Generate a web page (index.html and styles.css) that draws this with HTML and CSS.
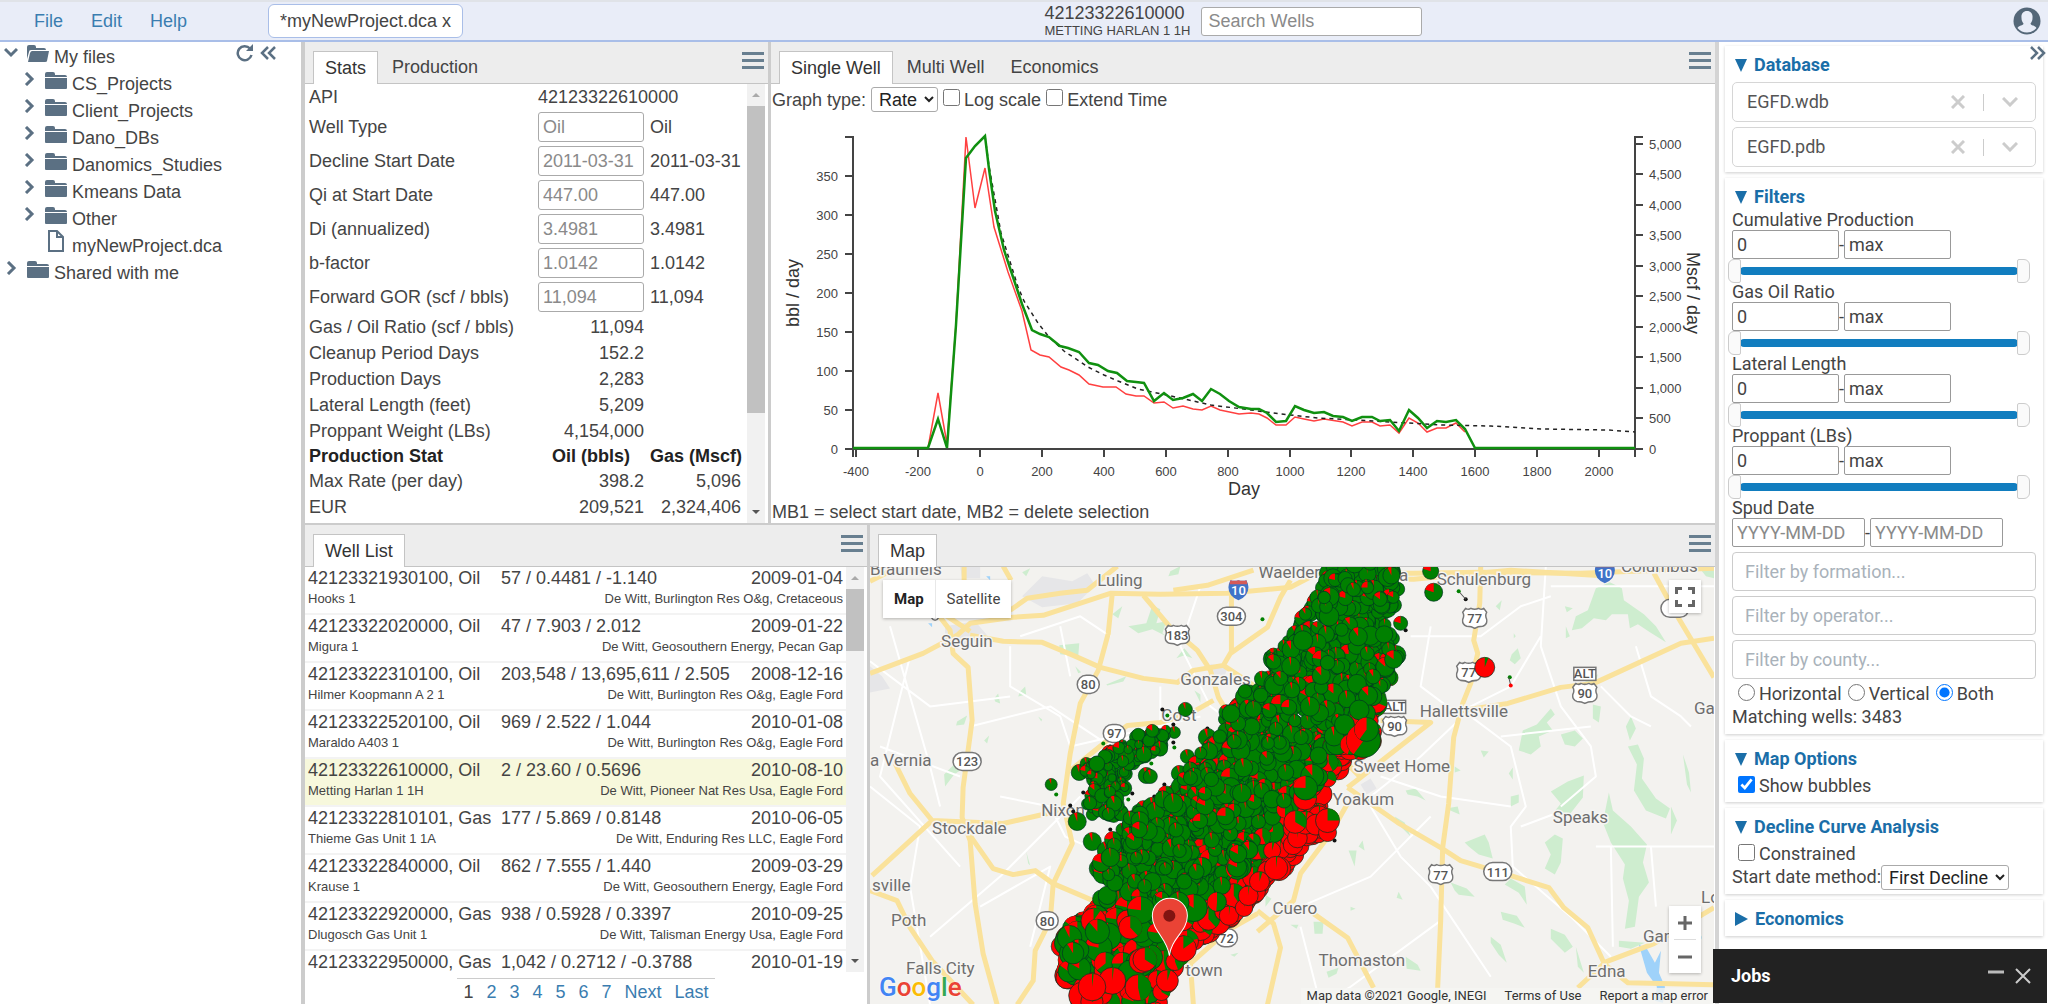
FILE: index.html
```html
<!DOCTYPE html>
<html lang="en">
<head>
    <meta charset="utf-8">
    <title>myNewProject.dca</title>
    <link rel="stylesheet" href="styles.css">
</head>
<body>
    <svg class="defs" width="0" height="0">
        <symbol id="folder" viewBox="0 0 22 18"><path d="M0 2q0-2 2-2h6q2 0 2 2v1h10q2 0 2 2H0zM0 6h22v10q0 1-1 1H1q-1 0-1-1z"/></symbol>
        <symbol id="folder_open" viewBox="0 0 22 18"><path d="M0 14V2q0-2 2-2h5q2 0 2 2v1h8q2 0 2 2H4q-2 0-2 2zM1 17l2-9q1-2 2-2h17l-2 10q0 1-2 1z"/></symbol>
        <symbol id="file" viewBox="0 0 16 22"><path d="M1 1h8l6 6v14H1zM9 1v6h6" fill="none" stroke="#5b7083" stroke-width="2"/></symbol>
        <symbol id="right" viewBox="0 0 10 14"><path d="M2 1l6 6-6 6" fill="none" stroke="#5b7083" stroke-width="3"/></symbol>
        <symbol id="down" viewBox="0 0 14 10"><path d="M1 2l6 6 6-6" fill="none" stroke="#5b7083" stroke-width="3"/></symbol>
        <symbol id="menu" viewBox="0 0 22 17"><path d="M0 1.5h22M0 8.5h22M0 15.5h22" stroke="#687f90" stroke-width="3"/></symbol>
        <symbol id="clear" viewBox="0 0 14 14"><path d="M1 1l12 12M13 1L1 13" stroke="#ccc" stroke-width="3"/></symbol>
        <symbol id="caret" viewBox="0 0 16 10"><path d="M1 1l7 7 7-7" fill="none" stroke="#ccc" stroke-width="3"/></symbol>
        <symbol id="us" viewBox="0 0 26 22"><path d="M4 1q3 2 5 0q4 2 8 0q3 2 5 0l3 4q-2 3 0 7q1 5-4 7q-5 0-8 2q-3-2-8-2q-5-2-4-7q2-4 0-7z" fill="#fff" stroke="#777" stroke-width="1.5"/></symbol>
        <symbol id="interstate" viewBox="0 0 22 22"><path d="M3 1q4 1 8 0q4 1 8 0q2 4 2 7q0 9-10 13q-10-4-10-13q0-3 2-7z" fill="#3f73c8"/><path d="M3 1q4 1 8 0q4 1 8 0l1 4H2z" fill="#d55a58"/></symbol>
    </svg>

    <header class="topbar">
        <div class="topbar_left">
            <nav class="menu">
                <a href="#">File</a>
                <a href="#">Edit</a>
                <a href="#">Help</a>
            </nav>
            <button class="project_tab">*myNewProject.dca x</button>
        </div>
        <div class="well_title">
            <div>42123322610000</div>
            <div class="small">METTING HARLAN 1 1H</div>
        </div>
        <input class="search" type="text" placeholder="Search Wells" aria-label="Search Wells">
        <button class="user" aria-label="Account">
            <svg width="28" height="28" viewBox="0 0 28 28"><circle cx="14" cy="14" r="13.5" fill="#546778"/><path d="M14 4c4 0 6 3 5.500 7c0 3-1 4-2 5.500c0 2 5 2 6 4.500q-4 4.500-9.500 4.500T4.500 21c1-2.500 6-2.500 6-4.500c-1-1.500-2-2.500-2-5.500C8 7 10 4 14 4z" fill="#e9edf8"/></svg>
        </button>
    </header>

    <main class="layout">
        <aside class="files">
            <div class="files_tools">
                <button aria-label="Refresh"><svg width="18" height="18" viewBox="0 0 18 18"><path d="M14 4.500A7 7 0 1 0 15.500 11" fill="none" stroke="#5b7083" stroke-width="2.500"/><path d="M17 0v7h-7z" fill="#5b7083"/></svg></button>
                <button aria-label="Collapse"><svg width="16" height="16" viewBox="0 0 16 16"><path d="M8 2L2 8l6 6M15 2L9 8l6 6" fill="none" stroke="#5b7083" stroke-width="2.500"/></svg></button>
            </div>
            <ul class="tree">
                <li><svg class="arrow"><use href="#down"/></svg><svg class="icon"><use href="#folder_open"/></svg>My files</li>
                <li class="child"><svg class="arrow"><use href="#right"/></svg><svg class="icon"><use href="#folder"/></svg>CS_Projects</li>
                <li class="child"><svg class="arrow"><use href="#right"/></svg><svg class="icon"><use href="#folder"/></svg>Client_Projects</li>
                <li class="child"><svg class="arrow"><use href="#right"/></svg><svg class="icon"><use href="#folder"/></svg>Dano_DBs</li>
                <li class="child"><svg class="arrow"><use href="#right"/></svg><svg class="icon"><use href="#folder"/></svg>Danomics_Studies</li>
                <li class="child"><svg class="arrow"><use href="#right"/></svg><svg class="icon"><use href="#folder"/></svg>Kmeans Data</li>
                <li class="child"><svg class="arrow"><use href="#right"/></svg><svg class="icon"><use href="#folder"/></svg>Other</li>
                <li class="child"><svg class="arrow"></svg><svg class="icon doc"><use href="#file"/></svg>myNewProject.dca</li>
                <li><svg class="arrow"><use href="#right"/></svg><svg class="icon"><use href="#folder"/></svg>Shared with me</li>
            </ul>
        </aside>

        <div class="center">
            <div class="row row_top">
                <section class="panel">
                    <div class="tabs">
                        <button class="tab active">Stats</button>
                        <button class="tab">Production</button>
                        <button class="panel_menu" aria-label="Panel menu"><svg width="22" height="17"><use href="#menu"/></svg></button>
                    </div>
                    <div class="scroll_area">
                        <div class="scroll_content">
                            <table class="stats">
                                <colgroup><col class="col_name"><col class="col_oil"><col></colgroup>
                                <tr><td>API</td><td colspan="2">42123322610000</td></tr>
                                <tr class="edit"><td><label for="well_type">Well Type</label></td><td><input id="well_type" placeholder="Oil"></td><td>Oil</td></tr>
                                <tr class="edit"><td><label for="decline_start">Decline Start Date</label></td><td><input id="decline_start" placeholder="2011-03-31"></td><td>2011-03-31</td></tr>
                                <tr class="edit"><td><label for="qi">Qi at Start Date</label></td><td><input id="qi" placeholder="447.00"></td><td>447.00</td></tr>
                                <tr class="edit"><td><label for="di">Di (annualized)</label></td><td><input id="di" placeholder="3.4981"></td><td>3.4981</td></tr>
                                <tr class="edit"><td><label for="b_factor">b-factor</label></td><td><input id="b_factor" placeholder="1.0142"></td><td>1.0142</td></tr>
                                <tr class="edit"><td><label for="gor">Forward GOR (scf / bbls)</label></td><td><input id="gor" placeholder="11,094"></td><td>11,094</td></tr>
                                <tr class="num"><td>Gas / Oil Ratio (scf / bbls)</td><td>11,094</td><td></td></tr>
                                <tr class="num"><td>Cleanup Period Days</td><td>152.2</td><td></td></tr>
                                <tr class="num"><td>Production Days</td><td>2,283</td><td></td></tr>
                                <tr class="num"><td>Lateral Length (feet)</td><td>5,209</td><td></td></tr>
                                <tr class="num"><td>Proppant Weight (LBs)</td><td>4,154,000</td><td></td></tr>
                                <tr class="head"><th>Production Stat</th><th>Oil (bbls)</th><th>Gas (Mscf)</th></tr>
                                <tr class="num"><td>Max Rate (per day)</td><td>398.2</td><td>5,096</td></tr>
                                <tr class="num"><td>EUR</td><td>209,521</td><td>2,324,406</td></tr>
                            </table>
                        </div>
                        <div class="scrollbar"><i class="up"></i><b class="thumb thumb_stats"></b><i class="dn"></i></div>
                    </div>
                </section>

                <section class="panel">
                    <div class="tabs">
                        <button class="tab active">Single Well</button>
                        <button class="tab">Multi Well</button>
                        <button class="tab">Economics</button>
                        <button class="panel_menu" aria-label="Panel menu"><svg width="22" height="17"><use href="#menu"/></svg></button>
                    </div>
                    <div class="chart_tools">
                        <label for="graph_type">Graph type:</label>
                        <select id="graph_type"><option>Rate</option></select>
                        <label><input type="checkbox">Log scale</label>
                        <label><input type="checkbox">Extend Time</label>
                    </div>
                    <svg class="chart" viewBox="0 0 942 386">
                        <g id="axes"></g>
                        <text class="axis_title" transform="translate(21 178) rotate(-90)" text-anchor="middle" dy="6">bbl / day</text>
                        <text class="axis_title" transform="translate(921 178) rotate(90)" text-anchor="middle" dy="6">Mscf / day</text>
                        <text class="axis_title" x="472" y="380" text-anchor="middle">Day</text>
                        <polyline class="gas" points="81,333 156,333 166,278 175,329 184,209 194,22 203,93 213,53 222,112 236,157 250,196 259,235 268,240 277,242 289,252 297,255 307,260 317,269 331,272 344,272 354,279 364,281 372,281 382,288 392,287 401,293 411,291 421,294 430,295 439,291 448,295 467,299 479,298 487,299 495,303 504,310 514,310 523,302 532,304 542,306 552,304 571,307 580,311 590,307 600,307 608,311 618,310 627,318 637,303 646,308 655,317 665,313 674,313 684,308 693,317"/>
                        <polyline class="fit" points="213,21 217,51 229,118 246,172 252,186 266,208 277,222 292,236 316,252 332,260 346,266 366,274 399,281 439,290 479,295 509,299 546,303 602,306 669,310 719,311 769,314 836,315 863,317"/>
                        <polyline class="oil" points="81,333 156,333 166,304 175,333 184,210 194,43 203,31 213,21 217,54 223,96 232,135 241,162 250,189 260,215 268,219 277,222 288,231 296,233 307,237 317,248 326,250 336,256 345,258 355,266 364,267 372,268 382,286 392,278 401,285 411,283 421,279 430,286 439,274 448,279 457,286 467,292 479,294 487,294 495,298 504,307 514,306 523,291 532,295 542,298 552,297 561,301 571,302 580,306 590,302 600,302 608,306 618,305 627,316 637,295 646,303 655,313 665,306 674,307 684,305 693,314 703,333 863,333"/>
                    </svg>
                    <div class="hint">MB1 = select start date, MB2 = delete selection</div>
                </section>
            </div>

            <div class="row row_bottom">
                <section class="panel">
                    <div class="tabs">
                        <button class="tab active">Well List</button>
                        <button class="panel_menu" aria-label="Panel menu"><svg width="22" height="17"><use href="#menu"/></svg></button>
                    </div>
                    <div class="scroll_area">
                        <ul class="scroll_content wells">
                            <li><div class="well_main"><span>42123321930100, Oil</span><span>57 / 0.4481 / -1.140</span><span>2009-01-04</span></div><div class="well_sub"><span>Hooks 1</span><span>De Witt, Burlington Res O&amp;g, Cretaceous</span></div></li>
                            <li><div class="well_main"><span>42123322020000, Oil</span><span>47 / 7.903 / 2.012</span><span>2009-01-22</span></div><div class="well_sub"><span>Migura 1</span><span>De Witt, Geosouthern Energy, Pecan Gap</span></div></li>
                            <li><div class="well_main"><span>42123322310100, Oil</span><span>203,548 / 13,695,611 / 2.505</span><span>2008-12-16</span></div><div class="well_sub"><span>Hilmer Koopmann A 2 1</span><span>De Witt, Burlington Res O&amp;g, Eagle Ford</span></div></li>
                            <li><div class="well_main"><span>42123322520100, Oil</span><span>969 / 2.522 / 1.044</span><span>2010-01-08</span></div><div class="well_sub"><span>Maraldo A403 1</span><span>De Witt, Burlington Res O&amp;g, Eagle Ford</span></div></li>
                            <li class="selected"><div class="well_main"><span>42123322610000, Oil</span><span>2 / 23.60 / 0.5696</span><span>2010-08-10</span></div><div class="well_sub"><span>Metting Harlan 1 1H</span><span>De Witt, Pioneer Nat Res Usa, Eagle Ford</span></div></li>
                            <li><div class="well_main"><span>42123322810101, Gas</span><span>177 / 5.869 / 0.8148</span><span>2010-06-05</span></div><div class="well_sub"><span>Thieme Gas Unit 1 1A</span><span>De Witt, Enduring Res LLC, Eagle Ford</span></div></li>
                            <li><div class="well_main"><span>42123322840000, Oil</span><span>862 / 7.555 / 1.440</span><span>2009-03-29</span></div><div class="well_sub"><span>Krause 1</span><span>De Witt, Geosouthern Energy, Eagle Ford</span></div></li>
                            <li><div class="well_main"><span>42123322920000, Gas</span><span>938 / 0.5928 / 0.3397</span><span>2010-09-25</span></div><div class="well_sub"><span>Dlugosch Gas Unit 1</span><span>De Witt, Talisman Energy Usa, Eagle Ford</span></div></li>
                            <li><div class="well_main"><span>42123322950000, Gas</span><span>1,042 / 0.2712 / -0.3788</span><span>2010-01-19</span></div></li>
                        </ul>
                        <div class="scrollbar"><i class="up"></i><b class="thumb thumb_wells"></b><i class="dn"></i></div>
                    </div>
                    <nav class="pages">
                        <span>1</span>
                        <a href="#">2</a>
                        <a href="#">3</a>
                        <a href="#">4</a>
                        <a href="#">5</a>
                        <a href="#">6</a>
                        <a href="#">7</a>
                        <a href="#">Next</a>
                        <a href="#">Last</a>
                    </nav>
                </section>

                <section class="panel">
                    <div class="tabs">
                        <button class="tab active">Map</button>
                        <button class="panel_menu" aria-label="Panel menu"><svg width="22" height="17"><use href="#menu"/></svg></button>
                    </div>
                    <div class="map">
                        <svg class="map_canvas" viewBox="0 0 843 438" preserveAspectRatio="xMidYMid slice">
                            <g class="urban">
                                <path d="M152 30l20-20 30 5 15-8 8 12-18 18-35 4z"/>
                                <path d="M0 100l12 10 8 12-20 4zM75 60l30-5 12 14-20 10-22-4zM340 98l18 2-4 10-14-2zM90 0l20 0 0 12-18 0zM490 218l10-6 6 10-10 6zM30 350l12-2 4 8-14 2z"/>
                            </g>
                            <g class="park">
                                <path d="M189 79l20-2-1 13-18-2zM124 132l4-5 2 10-5-2zM150 125l5-5 1 8-8 2zM87 155l10-6-3 9-8 1zM74 208l10-10 12 2-12 8-9 12zM114 174l5-5-2 8zM168 150l4 3-1 2z"/>
                                <path d="M258 60l18-3 6-18 8 4-4 14 10-2-4 12 6 4-16-8-14 4zM300 5l10-5-2 8-10 2zM306 92l8-10 8 10-8-3zM236 118l20-8-3 5-16 4zM242 48l10-8-4 12zM324 124l6 4 0 8zM205 100l6 6-3 1zM152 6l8-4-4 8zM156 285l4 14-2-2z"/>
                                <path d="M705 50l12-6 8-22 14-6 12 6 2 12 20 14 12 12 10 16-16-10-12-8-8 4-2-14-16 0-6 6-12-2-12 10-10 2zM694 40l8 2-6 4zM641 88l6-6 3 10-6 6-5-4zM695 60l4 10-4 2zM643 67l2 3-2 2zM713 116l14-8-2 8-14 4zM722 138l8 2-2 16-6-4z"/>
                                <path d="M652 164l14-6 14-16 4 6-8 8 6 8-14 6 2 10-10 8-12-4zM690 168l14-4 8 8-8 8-10-2zM697 215l16-6-1 22-14 18-16-2 8-10-10-12zM757 180l10-2 6 14-2 20 14 20 14 10-4 10-20-8-12-20 3-26zM755 160l5-10 5 12-6 12zM800 240l6 14-6 14zM812 188l6 18 2 20-4-8z"/>
                                <path d="M738 226l4 18 18 16 16 18-4 18 6 20-10 14-4 30-10 2 4-28-6-22 2-14-14-22-8-20zM674 276l10-8 8 4-2 24-6 12-10-6 6-14zM594 276l20-8 4 8 4 16-14-4-10-8zM640 312l14 8 2 18-8-12-14-8zM640 230l8-2 0 8-8 4zM580 316l16 6 8 8-16-2-4-4zM524 250l10 6 6 14-10-10zM478 284l8 0-2 16zM488 280l4-6 2 10zM610 184l8 1-5 6zM575 242l12-2 2 8zM535 224l10-2 10 12-8-4-10-2zM584 200l6 4-6 2zM638 207l4-6 0 12zM630 345l16 4 8 12-10-4-12-4zM680 362l14 6 8 12-8 6-14-14zM705 380l8 26-6-6zM748 374l26 2-14 6-12-2zM620 370l10 8 6 18-8-8-8-12zM535 390l12 8 3 6-14-2zM456 405l12-4-2 6-8 4zM443 355l10 0-1 12-8 0zM420 358l8 0-2 4zM528 325l4 8-6-2zM480 340l5 2-5 2zM395 328l6 4-6 8zM360 388l8-2-4 4zM827 0l16 0 0 12-8-2zM625 40l6-6-2 10z"/>
                            </g>
                            <path class="water" d="M768 378l8 4 8 14 6-12-2 22 6 14-2 16-8-2 2-14-10-14zM116 10l4 0 0 4zM58 57l4 0 0 4z"/>
                            <g class="minor">
                                <path d="M0 95L60 140 140 130M40 90L10 210 90 300M20 60L60 200 70 240M140 80V120L190 150 200 180 330 150M190 60L200 110M100 160L180 140 240 180M0 220L50 260 40 320 60 438M110 340L180 300 160 380M60 370L130 310 210 230M130 230L180 240 195 270 240 290M10 180L90 210M330 20L310 80 340 140 420 200M150 70l60-20 30 20M290 120l0 40-60 20"/>
                                <path d="M540 70H610L650 40 680 30M675 0L670 80 690 140 720 180 725 210 690 240M560 60L550 120 590 150M592 144L640 120 670 70M592 144L640 180 655 240 640 260 642 300 700 350 740 390M500 160L470 200 430 260M500 240L530 290 560 320 620 410M560 250L500 310 430 340M650 260L690 245M725 280H843M740 280L742 380M780 280L785 340M630 170L720 160M820 160L810 150 780 130 765 80M570 354L480 420 450 438M430 360L450 438M592 150L550 190 500 230M510 210L570 230 640 240M730 120L760 150 780 160M680 20H843"/>
                            </g>
                            <g class="road">
                                <path d="M0 107L53 87 87 69 100 57 143 51 173 49 240 27 290 28 357 27 420 21 447 7 543 7 610 6 710 7 843 2"/>
                                <path d="M140 44L157 32 190 27 217 24 247 0M303 24L337 19 383 4M0 15L30 0M94 0v20M133 0l8 14M450 12L543 13 640 4 740 10"/>
                                <path d="M70 51L80 64 83 87 98 101 102 154 93 221 92 251 100 274 105 337 113 387 127 438M62 40l38 25"/>
                                <path d="M100 69L133 75 172 76 203 89 230 101 273 112 307 116 323 104 353 99 360 87 397 61 410 31 420 14M353 99l30 20"/>
                                <path d="M242 27L238 67 228 104 210 137 200 187 193 237 202 277 183 317 180 354 165 384 163 414 147 438M361 24V87"/>
                                <path d="M273 29L300 61 327 84 340 104 348 131 360 151M343 134L320 147 290 156 257 159 237 174 200 204"/>
                                <path d="M25 197L40 227 62 254 2 309M62 254L133 257 177 247 230 239M100 269L123 302 143 308 165 304 183 317 230 337"/>
                                <path d="M0 324L27 334 40 361 62 394 103 438M387 347L357 364 320 397 323 438M387 344L403 357 410 381 397 438"/>
                                <path d="M477 221L490 211 533 177 560 156 510 154M477 237L460 267 430 307 423 334 387 365M490 211L460 180"/>
                                <path d="M610 0L609 37 603 74 607 87 600 117 592 137 583 171 578 237 572 281 570 354 567 421"/>
                                <path d="M592 144L637 137 690 121 723 117 810 77 843 72M477 221L527 256 570 281 590 294 640 309 678 321 693 341 717 361 733 396 783 377 843 341"/>
                                <path d="M733 397L707 421M733 397L757 416 843 418M443 347L477 371 503 421M783 7L807 51 843 111"/>
                            </g>
                            <g id="labels"></g>
                            <g id="bubbles"></g>
                            <path d="M299 389C297 371 282 365 282 349A17.500 17.500 0 0 1 317 349C317 365 301 371 299 389z" fill="#ea4335" stroke="#fff" stroke-width="1"/>
                            <circle cx="299" cy="349" r="6" fill="#811411"/>
                        </svg>
                        <div class="map_type">
                            <button class="on">Map</button>
                            <button>Satellite</button>
                        </div>
                        <button class="map_button fullscreen" aria-label="Full screen"><svg width="20" height="20" viewBox="0 0 20 20"><path d="M1.500 7V1.500H7M13 1.500h5.500V7M18.500 13v5.500H13M7 18.500H1.500V13" fill="none" stroke="#666" stroke-width="3"/></svg></button>
                        <div class="zoom">
                            <button aria-label="Zoom in"><svg width="14" height="14" viewBox="0 0 14 14"><path d="M7 0v14M0 7h14" stroke="#666" stroke-width="3"/></svg></button>
                            <button aria-label="Zoom out"><svg width="14" height="14" viewBox="0 0 14 14"><path d="M0 7h14" stroke="#666" stroke-width="3"/></svg></button>
                        </div>
                        <div class="google"><span class="g_blue">G</span><span class="g_red">o</span><span class="g_yellow">o</span><span class="g_blue">g</span><span class="g_green">l</span><span class="g_red">e</span></div>
                        <div class="credits"><span>Map data ©2021 Google, INEGI</span><a href="#">Terms of Use</a><a href="#">Report a map error</a></div>
                    </div>
                </section>
            </div>
        </div>

        <aside class="options">
            <button class="hide_options" aria-label="Hide options"><svg width="16" height="16" viewBox="0 0 16 16"><path d="M1 2l6 6-6 6M8 2l6 6-6 6" fill="none" stroke="#5b7083" stroke-width="2.500"/></svg></button>
            <details class="card" open>
                <summary>Database</summary>
                <div class="picker"><select aria-label="Well database"><option>EGFD.wdb</option></select><svg width="14" height="14"><use href="#clear"/></svg><i></i><svg width="16" height="10"><use href="#caret"/></svg></div>
                <div class="picker"><select aria-label="Production database"><option>EGFD.pdb</option></select><svg width="14" height="14"><use href="#clear"/></svg><i></i><svg width="16" height="10"><use href="#caret"/></svg></div>
            </details>
            <details class="card" open>
                <summary>Filters</summary>
                <div class="filter">
                    <label for="cum_min">Cumulative Production</label>
                    <div class="range_inputs"><input id="cum_min" value="0">-<input value="max" aria-label="Cumulative Production max"></div>
                    <div class="range"><input type="range" class="low" value="0" aria-label="Cumulative Production from"><input type="range" class="high" value="100" aria-label="Cumulative Production to"></div>
                </div>
                <div class="filter">
                    <label for="gor_min">Gas Oil Ratio</label>
                    <div class="range_inputs"><input id="gor_min" value="0">-<input value="max" aria-label="Gas Oil Ratio max"></div>
                    <div class="range"><input type="range" class="low" value="0" aria-label="Gas Oil Ratio from"><input type="range" class="high" value="100" aria-label="Gas Oil Ratio to"></div>
                </div>
                <div class="filter">
                    <label for="lat_min">Lateral Length</label>
                    <div class="range_inputs"><input id="lat_min" value="0">-<input value="max" aria-label="Lateral Length max"></div>
                    <div class="range"><input type="range" class="low" value="0" aria-label="Lateral Length from"><input type="range" class="high" value="100" aria-label="Lateral Length to"></div>
                </div>
                <div class="filter">
                    <label for="prop_min">Proppant (LBs)</label>
                    <div class="range_inputs"><input id="prop_min" value="0">-<input value="max" aria-label="Proppant max"></div>
                    <div class="range"><input type="range" class="low" value="0" aria-label="Proppant from"><input type="range" class="high" value="100" aria-label="Proppant to"></div>
                </div>
                <div class="filter">
                    <label for="spud_min">Spud Date</label>
                    <div class="range_inputs dates"><input id="spud_min" placeholder="YYYY-MM-DD">-<input placeholder="YYYY-MM-DD" aria-label="Spud Date to"></div>
                </div>
                <input class="wide" placeholder="Filter by formation..." aria-label="Filter by formation">
                <input class="wide" placeholder="Filter by operator..." aria-label="Filter by operator">
                <input class="wide" placeholder="Filter by county..." aria-label="Filter by county">
                <div class="checks">
                    <label><input type="radio" name="direction">Horizontal</label>
                    <label><input type="radio" name="direction">Vertical</label>
                    <label><input type="radio" name="direction" checked>Both</label>
                </div>
                <div class="line">Matching wells: 3483</div>
            </details>
            <details class="card" open>
                <summary>Map Options</summary>
                <div class="checks"><label><input type="checkbox" checked>Show bubbles</label></div>
            </details>
            <details class="card" open>
                <summary>Decline Curve Analysis</summary>
                <div class="checks"><label><input type="checkbox">Constrained</label></div>
                <div class="line"><label for="start_method">Start date method:</label><select id="start_method"><option>First Decline</option></select></div>
            </details>
            <details class="card">
                <summary>Economics</summary>
            </details>
        </aside>
    </main>

    <div class="jobs">
        <b>Jobs</b>
        <button aria-label="Minimize"><svg width="16" height="16" viewBox="0 0 16 16"><path d="M0 4h16" stroke="#bbb" stroke-width="3"/></svg></button>
        <button aria-label="Close"><svg width="16" height="16" viewBox="0 0 16 16"><path d="M1 1l14 14M15 1L1 15" stroke="#ccc" stroke-width="2"/></svg></button>
    </div>

    <script src="script.js"></script>
</body>
</html>
```
FILE: styles.css
```css
* {
    box-sizing: border-box;
}
body {
    margin: 0;
    height: 100vh;
    display: flex;
    flex-direction: column;
    overflow: hidden;
    font-family: "Liberation Sans", Arial, sans-serif;
    font-size: 18px;
    line-height: 22px;
    color: #444;
    background: #fff;
}
button, input, select {
    font: inherit;
    color: inherit;
}
button {
    border: 0;
    padding: 0;
    background: none;
}
a {
    color: #3a7db0;
    text-decoration: none;
}
ul {
    list-style: none;
    margin: 0;
    padding: 0;
}
svg {
    display: block;
}
.defs {
    position: absolute;
}
.small {
    font-size: 13px;
    line-height: 16px;
}

/* top bar */
.topbar {
    display: flex;
    align-items: center;
    height: 42px;
    flex: none;
    border-top: 2px solid #e0e3e8;
    border-bottom: 2px solid #a9bee8;
    background: #e9edf8;
}
.topbar_left {
    display: flex;
    align-items: center;
    width: 51%;
    padding-left: 34px;
}
.menu {
    display: flex;
    gap: 28px;
    width: 234px;
}
.project_tab {
    height: 34px;
    padding: 0 11px;
    border: 1px solid #a9bee8;
    border-radius: 6px;
    background: #fff;
}
.well_title {
    width: 157px;
    line-height: 20px;
}
.search {
    width: 221px;
    height: 29px;
    padding: 0 6px;
    border: 1px solid #aaa;
    border-radius: 3px;
    background: #fff;
}
.search::placeholder, .stats input::placeholder, .dates input::placeholder {
    color: #8a8a8a;
}
.user {
    margin: 0 7px 0 auto;
}

.layout {
    flex: 1;
    min-height: 0;
    display: flex;
}

/* file tree */
.files {
    width: 305px;
    flex: none;
    border-right: 4px solid #ccc;
}
.files_tools {
    float: right;
    display: flex;
    align-items: center;
    gap: 6px;
    padding: 2px 25px 0 0;
}
.tree {
    margin-top: -1px;
    padding-left: 4px;
    fill: #5b7083;
}
.tree li {
    display: flex;
    height: 27px;
    align-items: flex-end;
}
.tree .child {
    padding-left: 18px;
}
.tree .arrow {
    width: 14px;
    height: 14px;
    margin: 0 9px 9px 0;
}
.tree .icon {
    width: 22px;
    height: 18px;
    margin: 0 5px 5px 0;
}
.tree .doc {
    height: 22px;
}

/* panels */
.center {
    flex: 1;
    min-width: 0;
    display: grid;
    grid-template-rows: 50% 1fr;
    gap: 2px;
    background: #ccc;
}
.row {
    display: grid;
    gap: 3px;
    min-height: 0;
}
.row_top {
    grid-template-columns: 463px 1fr;
}
.row_bottom {
    grid-template-columns: 562px 1fr;
}
.panel {
    display: flex;
    flex-direction: column;
    min-width: 0;
    min-height: 0;
    background: #fff;
}
.tabs {
    display: flex;
    align-items: flex-end;
    gap: 2px;
    height: 42px;
    flex: none;
    padding: 0 4px 0 8px;
    background: linear-gradient(#c4c4c4, #c4c4c4) bottom / 100% 1px no-repeat #ededed;
}
.tab {
    height: 33px;
    padding: 0 11px 2px;
    border: 1px solid transparent;
    border-bottom: 0;
}
.tab.active {
    padding-bottom: 0;
    border-color: #c4c4c4;
    background: #fff;
    color: #333;
}
.panel_menu {
    margin-left: auto;
    align-self: flex-start;
    padding-top: 10px;
}
.scroll_area {
    flex: 1;
    min-height: 0;
    display: flex;
}
.scroll_content {
    flex: 1;
    overflow: hidden;
}
.scrollbar {
    display: flex;
    flex-direction: column;
    align-items: center;
    width: 18px;
    margin-right: 3px;
    padding: 9px 0;
    background: #f1f1f1;
}
.scrollbar i {
    border: 4px solid transparent;
}
.scrollbar .up {
    border-top: 0;
    border-bottom-color: #aaa;
    margin-bottom: 9px;
}
.scrollbar .dn {
    border-bottom: 0;
    border-top-color: #555;
    margin-top: auto;
}
.thumb {
    width: 18px;
    background: #c1c1c1;
}
.thumb_stats {
    height: 73%;
}
.thumb_wells {
    height: 16%;
}

/* stats */
.stats {
    width: 100%;
    table-layout: fixed;
    border-spacing: 0;
}
.col_name {
    width: 233px;
}
.col_oil {
    width: 112px;
}
.stats tr {
    height: 26px;
}
.stats .edit {
    height: 34px;
}
.stats .head {
    height: 24px;
    color: #222;
}
.stats td, .stats th {
    padding: 0 6px 0 0;
    white-space: nowrap;
}
.stats td:first-child, .stats th:first-child {
    padding-left: 4px;
    text-align: left;
}
.stats .num td:not(:first-child) {
    text-align: right;
}
.stats input {
    display: block;
    width: 106px;
    height: 30px;
    padding: 0 4px;
    border: 1px solid #aaa;
    border-radius: 3px;
}

/* chart */
.chart_tools {
    display: flex;
    align-items: center;
    height: 31px;
    padding-left: 1px;
    gap: 5px;
}
.chart_tools label {
    display: flex;
    align-items: center;
}
select {
    height: 25px;
    padding: 0 3px;
    border: 1px solid #aaa;
    border-radius: 3px;
    background: #fff;
    color: #222;
}
input[type="checkbox"], input[type="radio"] {
    width: 17px;
    height: 17px;
    margin: 0 4px 4px 0;
}
.chart {
    flex: 1;
    min-height: 0;
    width: 100%;
}
.axis {
    fill: none;
    stroke: #444;
    stroke-width: 2;
}
.tick_label {
    font-size: 13px;
    fill: #444;
}
.axis_title {
    font-size: 18px;
    fill: #333;
}
.gas, .oil, .fit {
    fill: none;
}
.gas {
    stroke: #ff4040;
    stroke-width: 1.5;
}
.oil {
    stroke: #109010;
    stroke-width: 2.5;
}
.fit {
    stroke: #222;
    stroke-width: 1.5;
    stroke-dasharray: 4 4;
}
.hint {
    height: 22px;
    padding-left: 1px;
}

/* well list */
.wells li {
    height: 48px;
    padding: 0 3px;
    border-bottom: 2px solid #f3f3f3;
}
.wells .selected {
    background: #f7f8dc;
}
.well_main {
    display: grid;
    grid-template-columns: 193px 1fr auto;
}
.well_sub {
    display: flex;
    justify-content: space-between;
    font-size: 13px;
    line-height: 20px;
}
.pages {
    display: flex;
    align-self: center;
    gap: 13px;
    height: 26px;
    margin-top: 6px;
    padding: 2px 6px 0;
    border-top: 1px solid #ccc;
}

/* map */
.map {
    position: relative;
    flex: 1;
    min-height: 0;
    margin-right: 1px;
    overflow: hidden;
    background: #f3f2ef;
    font-family: Roboto, sans-serif;
}
.map_canvas {
    width: 100%;
    height: 100%;
}
.urban {
    fill: #e6e6e8;
}
.park {
    fill: #ceedcf;
}
.water {
    fill: #9fd2fa;
}
.minor {
    fill: none;
    stroke: #fff;
    stroke-width: 2;
    stroke-linejoin: round;
}
.road {
    fill: none;
    stroke: #fae29b;
    stroke-width: 5;
    stroke-linejoin: round;
}
.town {
    font-size: 17px;
    fill: #6e6e6e;
    stroke: #f6f5f3;
    stroke-width: 3;
    paint-order: stroke;
}
.shield {
    font-size: 13px;
    font-weight: 500;
    fill: #555;
    text-anchor: middle;
}
.pill {
    fill: #fff;
    stroke: #777;
    stroke-width: 1.5;
}
.on_blue {
    fill: #fff;
}
.map_type {
    position: absolute;
    left: 13px;
    top: 13px;
    display: flex;
    height: 38px;
    background: #fff;
    box-shadow: 0 1px 3px #0004;
    font-size: 15px;
}
.map_type button {
    padding: 0 11px;
}
.map_type .on {
    border-right: 1px solid #e8e8e8;
    color: #222;
    font-weight: 700;
}
.map_button, .zoom {
    position: absolute;
    right: 13px;
    width: 32px;
    background: #fff;
    box-shadow: 0 1px 3px #0004;
}
.map_button svg, .zoom svg {
    margin: auto;
}
.fullscreen {
    top: 13px;
    height: 33px;
}
.zoom {
    bottom: 31px;
    display: grid;
    height: 67px;
}
.zoom button + button {
    margin: 0 5px;
    border-top: 1px solid #ddd;
}
.google {
    position: absolute;
    left: 9px;
    bottom: 1px;
    font-size: 26px;
    line-height: 32px;
    font-weight: 500;
    text-shadow: 0 0 2px #fff;
}
.g_blue {
    color: #4285f4;
}
.g_red {
    color: #ea4335;
}
.g_yellow {
    color: #fbbc05;
}
.g_green {
    color: #34a853;
}
.credits {
    position: absolute;
    right: 0;
    bottom: 0;
    display: flex;
    gap: 18px;
    padding: 0 6px;
    background: #f5f5f3cc;
    font-size: 13px;
    line-height: 16px;
    color: #333;
}
.credits a {
    color: inherit;
}

/* options */
.options {
    position: relative;
    width: 333px;
    flex: none;
    padding: 4px 5px 0 6px;
    border-left: 4px solid #d4d4d4;
    font-family: Roboto, sans-serif;
}
.hide_options {
    position: absolute;
    right: 2px;
    top: 3px;
}
.card {
    margin-bottom: 6px;
    padding: 7px 7px 5px;
    box-shadow: 0 1px 3px #0003;
}
.card summary {
    display: flex;
    align-items: center;
    gap: 7px;
    height: 24px;
    padding-left: 3px;
    font-weight: 700;
    color: #1a6ea8;
}
.card summary::before {
    content: "";
    border: 6px solid transparent;
    border-width: 7px 0 7px 13px;
    border-left-color: #1a6ea8;
}
.card[open] summary::before {
    border-width: 13px 6px 0 6px;
    border-color: #1a6ea8 transparent transparent;
}
.picker {
    display: flex;
    align-items: center;
    gap: 18px;
    height: 40px;
    margin-top: 5px;
    padding: 0 17px 0 14px;
    border: 1px solid #d6d6d6;
    border-radius: 5px;
}
.picker select {
    appearance: none;
    flex: 1;
    padding: 0;
    border: 0;
    color: #555;
}
.picker i {
    width: 1px;
    height: 17px;
    background: #ccc;
}
.filter {
    display: grid;
}
.filter label {
    height: 21px;
    line-height: 21px;
}
.range_inputs {
    display: flex;
    align-items: center;
}
.range_inputs input {
    width: 107px;
    height: 29px;
    padding: 0 4px;
    border: 1px solid #999;
    border-radius: 2px;
}
.range_inputs.dates input {
    width: 133px;
}
.range {
    display: grid;
    align-items: center;
    height: 22px;
    margin: 0 6px 0 -4px;
}
.range::before {
    content: "";
    grid-area: 1 / 1;
    height: 8px;
    margin: 0 12px;
    border-radius: 4px;
    background: #117dbf;
}
.range input {
    grid-area: 1 / 1;
    appearance: none;
    width: 100%;
    margin: 0;
    background: none;
    pointer-events: none;
}
.range input::-webkit-slider-thumb {
    appearance: none;
    width: 13px;
    height: 24px;
    border: 1px solid #ccc;
    background: #fafafa;
    pointer-events: auto;
}
.range .low::-webkit-slider-thumb {
    border-radius: 6px 2px 2px 6px;
}
.range .high::-webkit-slider-thumb {
    border-radius: 2px 6px 6px 2px;
}
.wide {
    display: block;
    width: 100%;
    height: 39px;
    margin-top: 5px;
    padding: 0 12px;
    border: 1px solid #ccc;
    border-radius: 4px;
}
.wide::placeholder {
    color: #a9b2ba;
}
.checks {
    display: flex;
    align-items: flex-end;
    gap: 6px;
    height: 26px;
    padding-left: 6px;
}
.checks label {
    display: flex;
    align-items: center;
}
.line {
    display: flex;
    align-items: center;
    height: 24px;
}

/* jobs */
.jobs {
    position: fixed;
    right: 1px;
    bottom: 1px;
    display: flex;
    align-items: center;
    gap: 11px;
    width: 334px;
    height: 54px;
    padding: 0 16px 0 18px;
    background: #222;
    color: #fff;
    font-family: Roboto, sans-serif;
}
.jobs b {
    flex: 1;
}
```
FILE: script.js
```javascript
const SVG_NS = "http://www.w3.org/2000/svg";

function add(parent, name, attributes, text) {
    const element = document.createElementNS(SVG_NS, name);
    for (const key in attributes) {
        element.setAttribute(key, attributes[key]);
    }
    if (text) {
        element.textContent = text;
    }
    parent.appendChild(element);
    return element;
}

// chart axes
const axes = document.querySelector("#axes");
const left = 81, right = 863, top_ = 22, bottom = 334;
add(axes, "path", {class: "axis", d: `M${left - 8} ${top_}H${left}V${bottom}H${left - 8}`});
add(axes, "path", {class: "axis", d: `M${right + 8} ${top_}H${right}V${bottom}H${right + 8}`});
add(axes, "path", {class: "axis", d: `M${left} ${bottom + 8}V${bottom}H${right}V${bottom + 8}`});
for (let v = 0; v <= 350; v += 50) {
    const y = Math.round(bottom - v * 0.781);
    add(axes, "path", {class: "axis", d: `M${left - 8} ${y}H${left}`});
    add(axes, "text", {class: "tick_label", x: 66, y: y + 5, "text-anchor": "end"}, String(v));
}
for (let v = 0; v <= 5000; v += 500) {
    const y = Math.round(bottom - v * 0.0611);
    add(axes, "path", {class: "axis", d: `M${right} ${y}H${right + 8}`});
    add(axes, "text", {class: "tick_label", x: 877, y: y + 5}, v.toLocaleString("en-US"));
}
for (let v = -400; v <= 2000; v += 200) {
    const x = Math.round(208 + v * 0.3095);
    add(axes, "path", {class: "axis", d: `M${x} ${bottom}v8`});
    add(axes, "text", {class: "tick_label", x: x, y: 361, "text-anchor": "middle"}, String(v));
}

// map labels
const labels = document.querySelector("#labels");
const towns = [
    ["Braunfels", 0, 3], ["Luling", 227, 14], ["Waelder", 388, 6], ["Flatonia", 477, 9],
    ["Schulenburg", 566, 13], ["Columbus", 750, 0], ["Seguin", 71, 75], ["Gonzales", 310, 113],
    ["Cost", 291, 149], ["Hallettsville", 549, 145], ["Sweet Home", 483, 200], ["Yoakum", 462, 232],
    ["Speaks", 682, 250], ["Cuero", 402, 341], ["Thomaston", 448, 393], ["Edna", 717, 404],
    ["Ganado", 772, 369], ["Louise", 830, 330], ["Garwood", 823, 142], ["a Vernia", 0, 194],
    ["Stockdale", 62, 261], ["Nixon", 171, 243], ["Poth", 21, 353], ["sville", 2, 318],
    ["Falls City", 36, 401], ["town", 315, 403]
];
towns.forEach(([name, x, y]) => add(labels, "text", {class: "town", x: x, y: y + 6}, name));

function pill(text, x, y) {
    const w = text.length * 6 + 10;
    add(labels, "rect", {class: "pill", x: x - w / 2, y: y - 9, width: w, height: 18, rx: 9});
    add(labels, "text", {class: "shield", x: x, y: y + 5}, text);
}
function usRoute(text, x, y) {
    add(labels, "use", {href: "#us", x: x - 13, y: y - 11, width: 26, height: 22});
    add(labels, "text", {class: "shield", x: x, y: y + 5}, text);
}
function alternate(x, y) {
    add(labels, "rect", {class: "pill", x: x - 11, y: y - 7, width: 22, height: 13});
    add(labels, "text", {class: "shield", x: x, y: y + 4}, "ALT");
}
function interstate(x, y) {
    add(labels, "use", {href: "#interstate", x: x - 11, y: y - 11, width: 22, height: 22});
    add(labels, "text", {class: "shield on_blue", x: x, y: y + 5}, "10");
}
[["304", 361, 50], ["80", 218, 118], ["97", 244, 167], ["123", 97, 195], ["80", 177, 354],
    ["72", 356, 371], ["111", 627, 305], ["   ", 804, 42], ["", 65, 45]].forEach((p) => pill(...p));
[["183", 307, 69], ["77", 604, 52], ["77", 598, 106], ["90", 714, 127], ["90", 524, 160],
    ["77", 570, 308]].forEach((p) => usRoute(...p));
alternate(714, 108);
alternate(524, 141);
interstate(368, 24);
interstate(734, 7);

// well bubbles, green = oil share, red = gas share
const bubbles = document.querySelector("#bubbles");
const trend = [[465, -12], [523, -12], [540, 31], [522, 51], [537, 94], [522, 121], [511, 151], [511, 180],
    [497, 190], [478, 196], [476, 214], [456, 232], [470, 254], [460, 276], [438, 280], [432, 303], [399, 320],
    [384, 347], [352, 366], [322, 386], [308, 411], [290, 455], [213, 455], [186, 411], [179, 380], [203, 349],
    [230, 325], [220, 302], [230, 279], [260, 243], [287, 225], [310, 210], [320, 188], [348, 166], [347, 148],
    [362, 129], [389, 103], [388, 88], [408, 78], [415, 72], [426, 48], [443, 26], [446, 10]];
const north = [[199, 204], [250, 173], [278, 156], [302, 160], [298, 187], [270, 198], [265, 217], [255, 234],
    [260, 254], [237, 256], [210, 242], [218, 214]];
let seed = 7;

function random() {
    seed = (seed * 16807) % 2147483647;
    return seed / 2147483647;
}

function inside(x, y, shape) {
    let result = false;
    for (let i = 0, j = shape.length - 1; i < shape.length; j = i++) {
        const [xi, yi] = shape[i], [xj, yj] = shape[j];
        if ((yi > y) !== (yj > y) && x < (xj - xi) * (y - yi) / (yj - yi) + xi) {
            result = !result;
        }
    }
    return result;
}

function bubble(x, y, r, gas) {
    const base = gas > 0.5 ? "#f00" : "#008000";
    const wedge = gas > 0.5 ? "#008000" : "#f00";
    const share = gas > 0.5 ? 1 - gas : gas;
    const end = (gas > 0.5 ? 1 : -1) * share * 2 * Math.PI;
    add(bubbles, "circle", {cx: x, cy: y, r: r, fill: base, stroke: "#032", "stroke-width": 0.7});
    if (share > 0.02) {
        const ex = x + r * Math.sin(end), ey = y - r * Math.cos(end);
        add(bubbles, "path", {d: `M${x} ${y}V${y - r}A${r} ${r} 0 0 ${end > 0 ? 1 : 0} ${ex} ${ey}z`, fill: wedge});
    }
}

function fill(shape, count, minR, maxR) {
    while (count > 0) {
        const x = 175 + random() * 375, y = random() * 470 - 12;
        const d = ((x - 495) * 200 + (y - 150) * 160) / 256;
        let gas = random() < 0.5 ? random() * 0.25 : random() * 0.05;
        let r = minR + random() * (maxR - minR);
        if (shape === trend && d > -6) {
            gas = (d + 6) / 30 + random() * 0.6;
            r += 2;
        } else if (shape === trend && y > 335) {
            gas = random() * random() * 1.1 + (y > 410 ? 0.5 : 0);
            r += 4;
        }
        const e = r * 0.9;
        if (inside(x - e, y, shape) && inside(x + e, y, shape) && inside(x, y - e, shape) && inside(x, y + e, shape)) {
            bubble(x, y, r, Math.min(gas, 0.98));
            count--;
        }
    }
}

// dry holes and tiny producers
[[392, 53], [396, 88], [292, 143], [297, 149], [303, 158], [266, 166], [251, 175], [239, 183], [303, 176],
    [186, 228], [213, 226], [294, 218], [281, 197], [200, 239], [262, 227], [258, 233], [240, 263], [243, 270],
    [352, 152], [337, 162], [464, 274], [568, 25], [535, 64], [595, 33], [639, 111], [320, 199], [284, 230],
    [304, 181], [203, 245], [240, 180], [233, 177], [441, 35]].forEach(([x, y], i) => {
    add(bubbles, "circle", {cx: x, cy: y, r: 2, fill: i % 3 ? "#111" : "#008000"});
});
add(bubbles, "path", {d: "M588 25l7 8M638 111l2 8", stroke: "#555"});
add(bubbles, "circle", {cx: 588, cy: 25, r: 2, fill: "#008000"});
add(bubbles, "circle", {cx: 640, cy: 119, r: 2, fill: "#f00"});
[[315, 143, 7], [337, 171, 9], [181, 218, 6], [209, 206, 8], [317, 190, 7], [309, 207, 8], [276, 209, 8],
    [222, 275, 9], [207, 255, 9], [216, 197, 6], [280, 210, 7], [304, 166, 6], [222, 248, 6],
    [229, 302, 10], [236, 284, 9]].forEach(([x, y, r]) => bubble(x, y, r, 0.06));

fill(north, 150, 4, 8);
fill(trend, 2000, 6, 10);
bubble(560, 5, 8, 0.2);
bubble(563, 26, 9, 0.2);
bubble(530, 57, 7, 0.2);
bubble(523, 93, 9, 0.15);
bubble(614, 101, 10, 0.94);
bubble(457, 266, 9, 0.97);
bubble(493, 174, 17, 0.4);
bubble(496, 163, 12, 0.4);
bubble(457, 254, 12, 0.75);
bubble(389, 315, 10, 0.95);
bubble(313, 382, 13, 0.85);
bubble(297, 414, 11, 0.95);
```
